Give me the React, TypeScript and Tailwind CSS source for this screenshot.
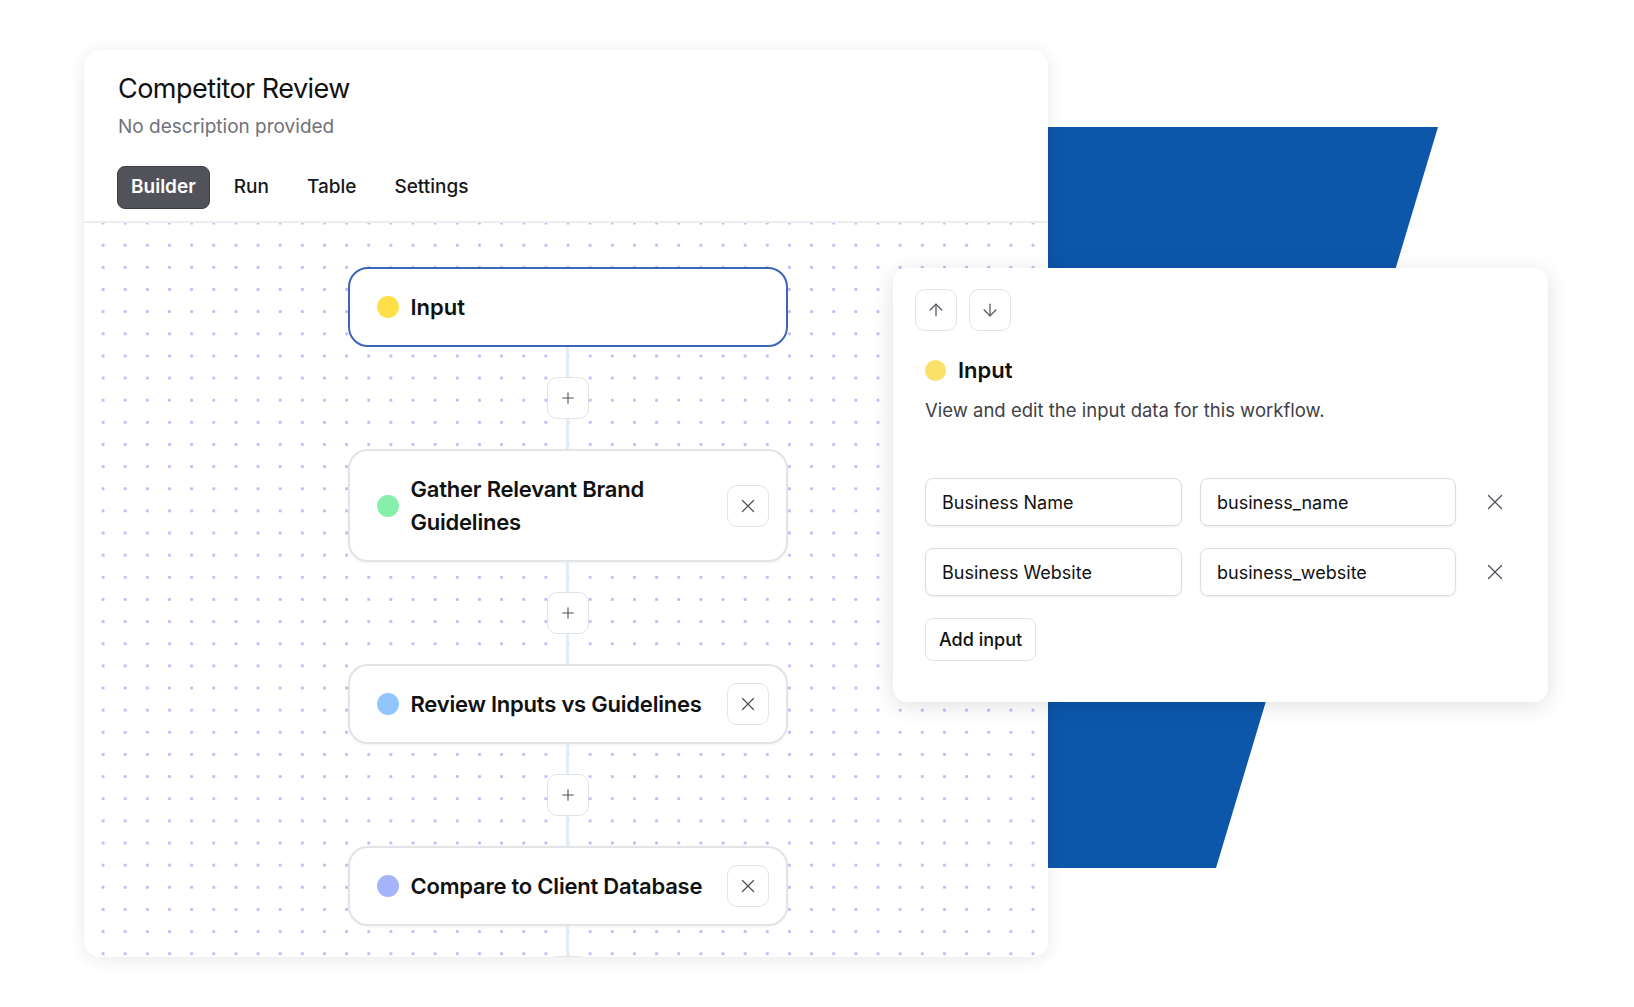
import { ArrowDown, ArrowUp, Plus, X } from "lucide-react";

const steps = [
  { label: "Gather Relevant Brand Guidelines", dot: "bg-[#86efac]" },
  { label: "Review Inputs vs Guidelines", dot: "bg-[#93c5fd]" },
  { label: "Compare to Client Database", dot: "bg-[#a5b4fc]" },
];

const fields = [
  { name: "Business Name", key: "business_name" },
  { name: "Business Website", key: "business_website" },
];

const tabs = ["Builder", "Run", "Table", "Settings"];

function Connector() {
  return (
    <div className="flex flex-col items-center">
      <div className="w-[3px] h-[30px] bg-[#e3ebf3]" />
      <button className="w-[42px] h-[42px] flex items-center justify-center rounded-[10px] border border-[#e4e4e7] bg-white text-[#52525b]">
        <Plus size={18} strokeWidth={1.5} />
      </button>
      <div className="w-[3px] h-[30px] bg-[#e3ebf3]" />
    </div>
  );
}

export default function App() {
  return (
    <div className="relative w-[1634px] h-[1007px] bg-white overflow-hidden font-['Inter',sans-serif] text-[#111111]">
      {/* blue backdrop */}
      <div className="absolute left-[1048px] top-[127px] w-[390px] h-[741px] bg-[#0d57ab] [clip-path:polygon(0_0,100%_0,168px_100%,0_100%)]" />

      {/* workflow card */}
      <div className="relative z-10 ml-[84px] mt-[50px] w-[964px] h-[907px] flex flex-col rounded-2xl bg-white overflow-hidden shadow-[0_2px_18px_rgba(0,0,0,0.09)]">
        <div className="px-[34px] pt-[22px] pb-[12px] border-b-2 border-[#ededed]">
          <h1 className="text-[27px] leading-[34px] tracking-[-0.02em]">Competitor Review</h1>
          <p className="mt-2 text-[19px] leading-[26px] text-[#71717a]">No description provided</p>
          <div className="mt-[26px] flex gap-[10px] -ml-[1px]">
            {tabs.map((t, i) => (
              <button
                key={t}
                className={
                  i === 0
                    ? "h-[43px] px-[13px] rounded-lg border border-[#3f3f46] bg-[#52525b] text-white text-[19px] font-semibold"
                    : "h-[43px] px-[14px] rounded-lg text-[#18181b] text-[19px] font-medium"
                }
              >
                {t}
              </button>
            ))}
          </div>
        </div>

        {/* canvas */}
        <div className="flex-1 flex flex-col items-center pt-[44px] pl-[3px] bg-[radial-gradient(circle,#c3b9f7_1.3px,transparent_1.7px)] bg-[size:22.15px_22.15px] bg-[position:8px_-11px]">
          <div className="w-[440px] h-[80px] flex items-center gap-3 pl-[27px] rounded-[20px] border-2 border-[#3d66ba] bg-white">
            <span className="w-[22px] h-[22px] rounded-full bg-[#fde047]" />
            <span className="text-[22px] font-semibold">Input</span>
          </div>
          {steps.map((s) => (
            <div key={s.label} className="flex flex-col items-center">
              <Connector />
              <div className="w-[440px] flex items-center gap-3 pl-[27px] pr-[17px] rounded-[20px] border-2 border-[#e4e4e7] bg-white shadow-[0_1px_3px_rgba(0,0,0,0.06)]">
                <span className={`w-[22px] h-[22px] shrink-0 rounded-full ${s.dot}`} />
                <span className="flex-1 py-[21.5px] text-[22px] leading-[33px] font-semibold tracking-[-0.01em]">
                  {s.label}
                </span>
                <button className="w-[42px] h-[42px] shrink-0 flex items-center justify-center rounded-[10px] border border-[#e4e4e7] bg-white text-[#52525b]">
                  <X size={22} strokeWidth={1.4} />
                </button>
              </div>
            </div>
          ))}
          <Connector />
        </div>
      </div>

      {/* input panel */}
      <div className="absolute z-20 left-[893px] top-[268px] w-[655px] h-[434px] rounded-[14px] bg-white pl-[22px] pt-[21px] shadow-[0_4px_22px_rgba(0,0,0,0.12)]">
        <div className="flex gap-3">
          {[ArrowUp, ArrowDown].map((Icon, i) => (
            <button
              key={i}
              className="w-[42px] h-[42px] flex items-center justify-center rounded-[10px] border border-[#e4e4e7] text-[#52525b]"
            >
              <Icon size={20} strokeWidth={1.5} />
            </button>
          ))}
        </div>
        <div className="pl-[10px]">
          <div className="mt-[25px] flex items-center gap-3 h-[28px]">
            <span className="w-[21px] h-[21px] rounded-full bg-[#fbe06a]" />
            <span className="text-[22px] font-semibold">Input</span>
          </div>
          <p className="mt-[13px] text-[18.5px] leading-[26px] text-[#3f3f46]">
            View and edit the input data for this workflow.
          </p>
          <div className="mt-[55px] flex flex-col gap-[22px]">
            {fields.map((f) => (
              <div key={f.key} className="flex items-center">
                <div className="w-[257px] h-[48px] flex items-center px-4 rounded-lg border border-[#dcdcdf] text-[18px] shadow-[0_1px_2px_rgba(0,0,0,0.08)]">
                  {f.name}
                </div>
                <div className="ml-[18px] w-[256px] h-[48px] flex items-center px-4 rounded-lg border border-[#dcdcdf] text-[18px] shadow-[0_1px_2px_rgba(0,0,0,0.08)]">
                  {f.key}
                </div>
                <span className="ml-[26px] text-[#52525b]">
                  <X size={26} strokeWidth={1.2} />
                </span>
              </div>
            ))}
          </div>
          <button className="mt-[22px] h-[43px] px-[13px] rounded-lg border border-[#e4e4e7] text-[18px] font-medium">
            Add input
          </button>
        </div>
      </div>
    </div>
  );
}
